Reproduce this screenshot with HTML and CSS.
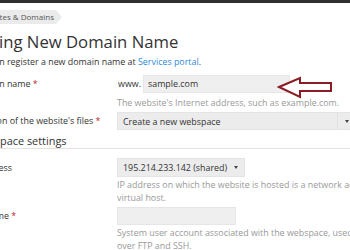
FILE: index.html
```html
<!DOCTYPE html>
<html lang="en">
<head>
    <meta charset="UTF-8">
    <title>Adding New Domain Name</title>
    <link rel="stylesheet" href="styles.css">
</head>
<body>
    <div class="topbar"></div>

    <div class="page">
        <div class="crumbs">
            <span class="crumb">Websites &amp; Domains</span>
        </div>

        <h1>Adding New Domain Name</h1>
        <p class="intro">You can register a new domain name at <a href="#">Services portal</a>.</p>

        <div class="row row-domain">
            <label class="label">Domain name <span class="req">*</span></label>
            <div class="field">
                <div class="domain">
                    <span class="www">www.</span>
                    <div class="input input-domain">sample.com</div>
                </div>
                <div class="hint">The website's Internet address, such as example.com.</div>
            </div>
        </div>

        <div class="row row-location">
            <label class="label">Location of the website's files <span class="req">*</span></label>
            <div class="field">
                <div class="select select-wide">
                    <span>Create a new webspace</span>
                    <span class="select-btn"><i class="caret"></i></span>
                </div>
            </div>
        </div>

        <h2 class="section">Webspace settings</h2>

        <div class="row row-ip">
            <label class="label label-ip">IP address</label>
            <div class="field">
                <div class="select select-ip">
                    <span>195.214.233.142 (shared)</span>
                    <i class="caret"></i>
                </div>
                <div class="hint">IP address on which the website is hosted is a network address of the<br>virtual host.</div>
            </div>
        </div>

        <div class="row row-user">
            <label class="label label-user">Username <span class="req">*</span></label>
            <div class="field">
                <div class="input input-user"></div>
                <div class="hint">System user account associated with the webspace, used to access the webspace files<br>over FTP and SSH.</div>
            </div>
        </div>
    </div>

    <!-- callout pointing at the domain field -->
    <svg class="callout" width="58" height="25" viewBox="0 0 58 25">
        <path d="M3 12 L24 3 L24 8 L55 8 L55 16 L24 16 L24 22 Z" fill="#fff" stroke="#8b1b25" stroke-width="2" stroke-linejoin="miter"/>
    </svg>
</body>
</html>
```

FILE: styles.css
```css
* {
    margin: 0;
    padding: 0;
    box-sizing: border-box;
}

body {
    position: relative;
    width: 350px;
    height: 250px;
    overflow: hidden;
    font-family: 'Open Sans', sans-serif;
    font-size: 8.9px;
    line-height: 13px;
    color: #333;
    background: #fff;
}

.topbar {
    height: 3px;
    background: #2f2f2f;
}

.page {
    width: 420px;
    margin-left: -28px;
}

.crumbs {
    margin-top: 7px;
    height: 14px;
}

.crumb {
    position: relative;
    display: inline-block;
    height: 14px;
    padding: 0 2px 0 5px;
    font-size: 8px;
    line-height: 14px;
    color: #555;
    background: #ebebeb;
}

.crumb::after {
    content: '';
    position: absolute;
    top: 0;
    left: 100%;
    border-left: 6px solid #ebebeb;
    border-top: 7px solid transparent;
    border-bottom: 7px solid transparent;
}

h1 {
    margin-top: 8px;
    margin-left: -4px;
    font-size: 16.7px;
    font-weight: 400;
    line-height: 20px;
    color: #333;
}

.intro {
    margin-top: 3px;
}

.intro a {
    color: #2c8ad6;
    text-decoration: none;
}

.row {
    display: flex;
    align-items: flex-start;
}

.label {
    width: 145px;
    flex: none;
    line-height: 18px;
}

.req {
    color: #c0262c;
}

.field {
    flex: none;
}

.row-domain {
    margin-top: 7px;
}

.row-location {
    margin-top: 3px;
}

.row-ip {
    margin-top: 9px;
}

.row-user {
    margin-top: 3px;
}

.domain {
    display: flex;
    align-items: center;
    gap: 2px;
}

.www {
    margin-left: 1px;
    line-height: 18px;
}

.input {
    height: 18px;
    padding: 0 4px;
    line-height: 16px;
    background: #efefef;
    border: 1px solid #e6e6e6;
}

.input-domain {
    width: 147px;
}

.input-user {
    width: 119px;
}

.select {
    display: flex;
    align-items: center;
    justify-content: space-between;
    height: 18px;
    padding-left: 5px;
    background: #ececec;
    border: 1px solid #e4e4e4;
}

.select-wide {
    width: 240px;
}

.select-btn {
    display: flex;
    align-items: center;
    justify-content: center;
    width: 19px;
    height: 100%;
    border-left: 1px solid #e0e0e0;
}

.select-ip {
    width: 128px;
    height: 19px;
    padding-right: 6px;
}

.label-ip {
    line-height: 19px;
    text-indent: -3px;
}

.label-user {
    text-indent: -6px;
}

.caret {
    display: block;
    width: 0;
    height: 0;
    border-top: 3px solid #444;
    border-left: 2.5px solid transparent;
    border-right: 2.5px solid transparent;
}

.hint {
    color: #999;
    white-space: nowrap;
}

.row-domain .hint {
    margin-top: 3px;
}

.row-ip .hint,
.row-user .hint {
    margin-top: 1px;
}

.section {
    margin-top: 4px;
    font-size: 10.9px;
    font-weight: 400;
    line-height: 14px;
    color: #333;
    border-bottom: 1px solid #e2e2e2;
}

.callout {
    position: absolute;
    left: 276px;
    top: 75px;
}
```
